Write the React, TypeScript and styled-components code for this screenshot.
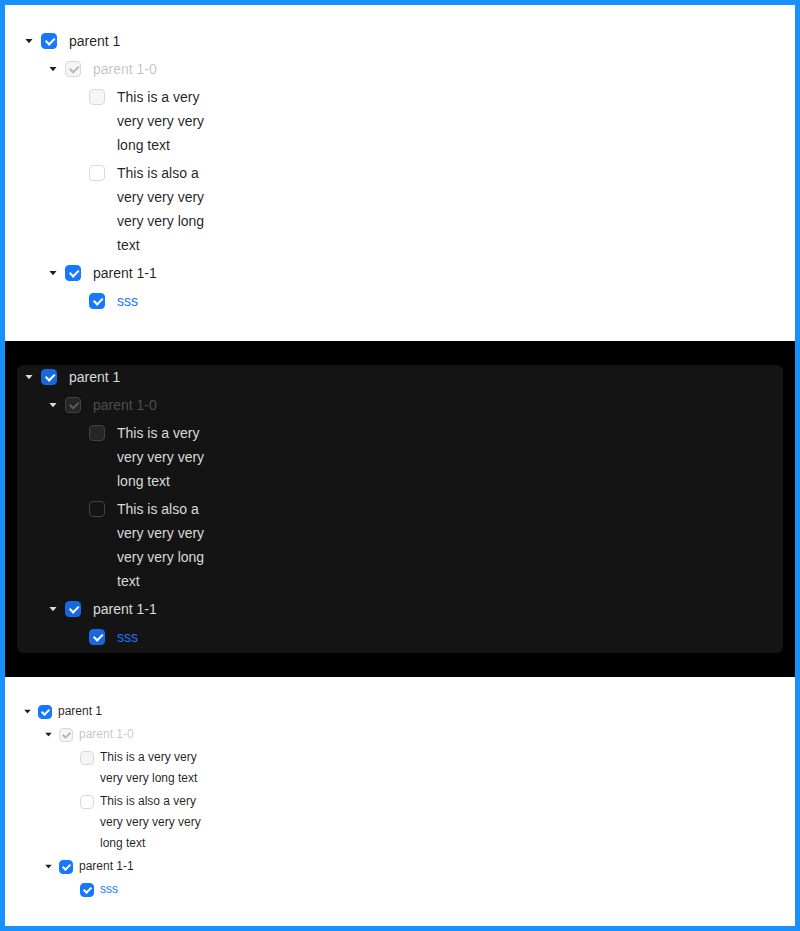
import React from "react";
import styled, { createGlobalStyle, ThemeProvider, css } from "styled-components";

type Tok = {
  pageBg: string;
  treeBg: string;
  radius: number;
  text: string;
  disabledText: string;
  fontSize: number;
  titleHeight: number;
  nodePad: number;
  cbSize: number;
  cbGap: number;
  wrapPad: number;
  caretSize: number;
  titleMax: number;
  primary: string;
  border: string;
  cbBg: string;
  disabledBg: string;
  disabledMark: string;
};

const light: Tok = {
  pageBg: "#ffffff",
  treeBg: "#ffffff",
  radius: 6,
  text: "rgba(0,0,0,0.88)",
  disabledText: "rgba(0,0,0,0.25)",
  fontSize: 14,
  titleHeight: 24,
  nodePad: 4,
  cbSize: 16,
  cbGap: 8,
  wrapPad: 4,
  caretSize: 10,
  titleMax: 100,
  primary: "#1677ff",
  border: "#d9d9d9",
  cbBg: "#ffffff",
  disabledBg: "rgba(0,0,0,0.04)",
  disabledMark: "rgba(0,0,0,0.25)",
};

const dark: Tok = {
  ...light,
  pageBg: "#000000",
  treeBg: "#141414",
  text: "rgba(255,255,255,0.85)",
  disabledText: "rgba(255,255,255,0.25)",
  primary: "#1668dc",
  border: "#424242",
  cbBg: "transparent",
  disabledBg: "rgba(255,255,255,0.08)",
  disabledMark: "rgba(255,255,255,0.25)",
};

const compact: Tok = {
  ...light,
  fontSize: 12,
  titleHeight: 21,
  nodePad: 2,
  cbSize: 14,
  cbGap: 4,
  wrapPad: 2,
  caretSize: 9,
  titleMax: 112,
};

const GlobalStyle = createGlobalStyle`
  html, body { margin: 0; padding: 0; }
  body { font-family: "Liberation Sans", Arial, sans-serif; }
`;

const Frame = styled.div`
  border: 5px solid #1890ff;
  display: flex;
  flex-direction: column;
`;

const Section = styled.section`
  background: ${(p) => p.theme.pageBg};
  padding: 24px 12px;
`;

const TreeBox = styled.div`
  background: ${(p) => p.theme.treeBg};
  border-radius: ${(p) => p.theme.radius}px;
  color: ${(p) => p.theme.text};
  font-size: ${(p) => p.theme.fontSize}px;
  display: flex;
  flex-direction: column;
`;

const NodeRow = styled.div`
  display: flex;
  align-items: flex-start;
  padding-bottom: ${(p) => p.theme.nodePad}px;
`;

const Indent = styled.span<{ $level: number }>`
  flex: none;
  width: ${(p) => p.$level * p.theme.titleHeight}px;
`;

const Switcher = styled.span`
  flex: none;
  width: ${(p) => p.theme.titleHeight}px;
  height: ${(p) => p.theme.titleHeight}px;
  display: flex;
  align-items: center;
  justify-content: center;
  color: ${(p) => p.theme.text};
  svg {
    width: ${(p) => p.theme.caretSize}px;
    height: ${(p) => p.theme.caretSize}px;
    display: block;
  }
`;

const Box = styled.span<{ $checked: boolean; $disabled: boolean }>`
  flex: none;
  position: relative;
  box-sizing: border-box;
  width: ${(p) => p.theme.cbSize}px;
  height: ${(p) => p.theme.cbSize}px;
  margin-top: ${(p) => (p.theme.titleHeight - p.theme.cbSize) / 2}px;
  margin-right: ${(p) => p.theme.cbGap}px;
  border-radius: 4px;
  border: 1px solid ${(p) => p.theme.border};
  background: ${(p) => p.theme.cbBg};
  ${(p) =>
    p.$checked &&
    !p.$disabled &&
    css`
      background: ${p.theme.primary};
      border-color: ${p.theme.primary};
    `}
  ${(p) =>
    p.$disabled &&
    css`
      background: ${p.theme.disabledBg};
      border-color: ${p.theme.border};
    `}
  &::after {
    content: "";
    display: ${(p) => (p.$checked ? "block" : "none")};
    position: absolute;
    box-sizing: border-box;
    left: 25%;
    top: 50%;
    width: ${(p) => (p.theme.cbSize / 14) * 5}px;
    height: ${(p) => (p.theme.cbSize / 14) * 8}px;
    border: 2px solid ${(p) => (p.$disabled ? p.theme.disabledMark : "#ffffff")};
    border-top: 0;
    border-left: 0;
    transform: rotate(45deg) translate(-50%, -50%);
  }
`;

const Wrapper = styled.span`
  padding: 0 ${(p) => p.theme.wrapPad}px;
  min-height: ${(p) => p.theme.titleHeight}px;
  line-height: ${(p) => p.theme.titleHeight}px;
`;

const Title = styled.span<{ $disabled?: boolean; $link?: boolean }>`
  display: block;
  max-width: ${(p) => p.theme.titleMax}px;
  color: ${(p) =>
    p.$disabled ? p.theme.disabledText : p.$link ? "#1677ff" : "inherit"};
`;

type Node = {
  title: string;
  checked: boolean;
  disabled?: boolean;
  disableCheckbox?: boolean;
  link?: boolean;
  children?: Node[];
};

const data: Node[] = [
  {
    title: "parent 1",
    checked: true,
    children: [
      {
        title: "parent 1-0",
        checked: true,
        disabled: true,
        children: [
          { title: "This is a very very very very long text", checked: false, disableCheckbox: true },
          { title: "This is also a very very very very very long text", checked: false },
        ],
      },
      {
        title: "parent 1-1",
        checked: true,
        children: [{ title: "sss", checked: true, link: true }],
      },
    ],
  },
];

const Caret = () => (
  <svg viewBox="0 0 1024 1024" fill="currentColor" aria-hidden>
    <path d="M840.4 300H183.6c-19.7 0-30.7 20.8-18.5 35l328.4 380.8c9.4 10.9 27.5 10.9 37 0L858.9 335c12.2-14.2 1.2-35-18.5-35z" />
  </svg>
);

const renderNodes = (nodes: Node[], level: number): React.ReactNode[] =>
  nodes.flatMap((n, i) => {
    const row = (
      <NodeRow key={`${level}-${i}-${n.title}`}>
        <Indent $level={level} />
        <Switcher>{n.children ? <Caret /> : null}</Switcher>
        <Box $checked={n.checked} $disabled={!!(n.disabled || n.disableCheckbox)} />
        <Wrapper>
          <Title $disabled={n.disabled} $link={n.link}>
            {n.title}
          </Title>
        </Wrapper>
      </NodeRow>
    );
    return [row, ...(n.children ? renderNodes(n.children, level + 1) : [])];
  });

const TreeDemo = ({ theme }: { theme: Tok }) => (
  <ThemeProvider theme={theme}>
    <Section>
      <TreeBox>{renderNodes(data, 0)}</TreeBox>
    </Section>
  </ThemeProvider>
);

export default function App() {
  return (
    <>
      <GlobalStyle />
      <Frame>
        <TreeDemo theme={light} />
        <TreeDemo theme={dark} />
        <TreeDemo theme={compact} />
      </Frame>
    </>
  );
}
